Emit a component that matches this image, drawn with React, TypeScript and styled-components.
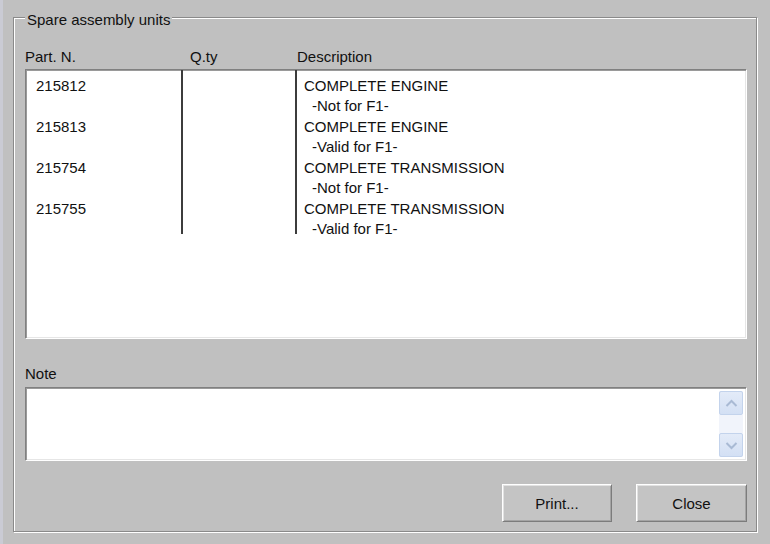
import React from "react";
import styled, { createGlobalStyle } from "styled-components";

const Global = createGlobalStyle`
  html, body {
    margin: 0;
    padding: 0;
    background: #c0c0c0;
    overflow: hidden;
  }
  body {
    font-family: "Liberation Sans", Arial, sans-serif;
    font-size: 15px;
    color: #111;
  }
`;

const Window = styled.div`
  box-sizing: border-box;
  width: 770px;
  height: 544px;
  display: flex;
  flex-direction: column;
  border-left: 3px solid #cacbd4;
  padding: 17px 13px 0 10px;
  background: #c0c0c0;
`;

const GroupBox = styled.section`
  position: relative;
  display: flex;
  flex-direction: column;
  border: 1px solid #8a8a8a;
  box-shadow: inset 1px 1px 0 #ffffff, 1px 1px 0 #ffffff;
  padding: 31px 9px 9px 11px;
`;

const GroupTitle = styled.span`
  position: absolute;
  top: -6px;
  left: 11px;
  padding: 0 2px;
  line-height: 16px;
  background: #c0c0c0;
  white-space: nowrap;
`;

const HeaderRow = styled.div`
  display: grid;
  grid-template-columns: 156px 114px 1fr;
  height: 16px;
  line-height: 16px;
`;

const HeaderCell = styled.span<{ $pad: number }>`
  padding-left: ${(p) => p.$pad}px;
  white-space: nowrap;
`;

const ListBox = styled.div`
  margin-top: 4px;
  height: 270px;
  box-sizing: border-box;
  background: #ffffff;
  border: 1px solid;
  border-color: #808080 #ffffff #ffffff #808080;
  box-shadow: inset 1px 1px 0 #9a9a9a, inset -1px -1px 0 #e6e6e6;
`;

const Table = styled.div`
  display: grid;
  grid-template-columns: 155px 114px 1fr;
  grid-template-rows: 164px;
  height: 164px;
`;

const Column = styled.div<{ $divider?: boolean; $pad: number }>`
  box-sizing: border-box;
  height: 164px;
  padding-top: 5.5px;
  padding-left: ${(p) => p.$pad}px;
  border-left: ${(p) => (p.$divider ? "2px solid #3c3c3c" : "none")};
  line-height: 20.5px;
  overflow: visible;
  white-space: nowrap;
`;

const Entry = styled.div`
  height: 41px;
`;

const SubLine = styled.div`
  padding-left: 8px;
`;

const NoteLabel = styled.div`
  margin-top: 27px;
  height: 16px;
  line-height: 16px;
`;

const NoteBox = styled.div`
  margin-top: 5px;
  height: 74px;
  box-sizing: border-box;
  display: flex;
  background: #ffffff;
  border: 1px solid;
  border-color: #808080 #ffffff #ffffff #808080;
  box-shadow: inset 1px 1px 0 #9a9a9a, inset -1px -1px 0 #e6e6e6;
`;

const NoteText = styled.div`
  flex: 1;
`;

const ScrollBar = styled.div`
  width: 24px;
  margin: 3px 3px 3px 0;
  display: flex;
  flex-direction: column;
  background: #f1f4fb;
`;

const ScrollButton = styled.div`
  height: 24px;
  box-sizing: border-box;
  border: 1px solid #c3d3ec;
  border-radius: 2px;
  background: linear-gradient(#e3ebf8, #d3e0f4);
  display: flex;
  align-items: center;
  justify-content: center;
`;

const Track = styled.div`
  flex: 1;
`;

const ButtonRow = styled.div`
  margin-top: 23px;
  display: flex;
  justify-content: flex-end;
  gap: 24px;
`;

const Button = styled.button<{ $w: number }>`
  width: ${(p) => p.$w}px;
  height: 38px;
  box-sizing: border-box;
  font-family: "Liberation Sans", Arial, sans-serif;
  font-size: 15px;
  color: #111;
  background: #c4c4c4;
  border: 1px solid;
  border-color: #ffffff #7c7c7c #7c7c7c #ffffff;
  box-shadow: inset 1px 1px 0 #e2e2e2, inset -1px -1px 0 #a4a4a4;
  padding: 0;
  cursor: default;
`;

const Chevron = ({ up }: { up?: boolean }) => (
  <svg width="13" height="9" viewBox="0 0 13 9">
    <path
      d={up ? "M1.5 7 L6.5 2 L11.5 7" : "M1.5 2 L6.5 7 L11.5 2"}
      fill="none"
      stroke="#a9bad4"
      strokeWidth="2"
    />
  </svg>
);

const items = [
  { part: "215812", desc: "COMPLETE ENGINE", note: "-Not for F1-" },
  { part: "215813", desc: "COMPLETE ENGINE", note: "-Valid for F1-" },
  { part: "215754", desc: "COMPLETE TRANSMISSION", note: "-Not for F1-" },
  { part: "215755", desc: "COMPLETE TRANSMISSION", note: "-Valid for F1-" },
];

export default function App() {
  return (
    <>
      <Global />
      <Window>
        <GroupBox>
          <GroupTitle>Spare assembly units</GroupTitle>
          <HeaderRow>
            <HeaderCell $pad={0}>Part. N.</HeaderCell>
            <HeaderCell $pad={9}>Q.ty</HeaderCell>
            <HeaderCell $pad={2}>Description</HeaderCell>
          </HeaderRow>
          <ListBox>
            <Table>
              <Column $pad={10}>
                {items.map((it) => (
                  <Entry key={it.part}>{it.part}</Entry>
                ))}
              </Column>
              <Column $divider $pad={0}>
                {items.map((it) => (
                  <Entry key={it.part} />
                ))}
              </Column>
              <Column $divider $pad={7}>
                {items.map((it) => (
                  <Entry key={it.part}>
                    <div>{it.desc}</div>
                    <SubLine>{it.note}</SubLine>
                  </Entry>
                ))}
              </Column>
            </Table>
          </ListBox>
          <NoteLabel>Note</NoteLabel>
          <NoteBox>
            <NoteText />
            <ScrollBar>
              <ScrollButton>
                <Chevron up />
              </ScrollButton>
              <Track />
              <ScrollButton>
                <Chevron />
              </ScrollButton>
            </ScrollBar>
          </NoteBox>
          <ButtonRow>
            <Button $w={110}>Print...</Button>
            <Button $w={111}>Close</Button>
          </ButtonRow>
        </GroupBox>
      </Window>
    </>
  );
}
